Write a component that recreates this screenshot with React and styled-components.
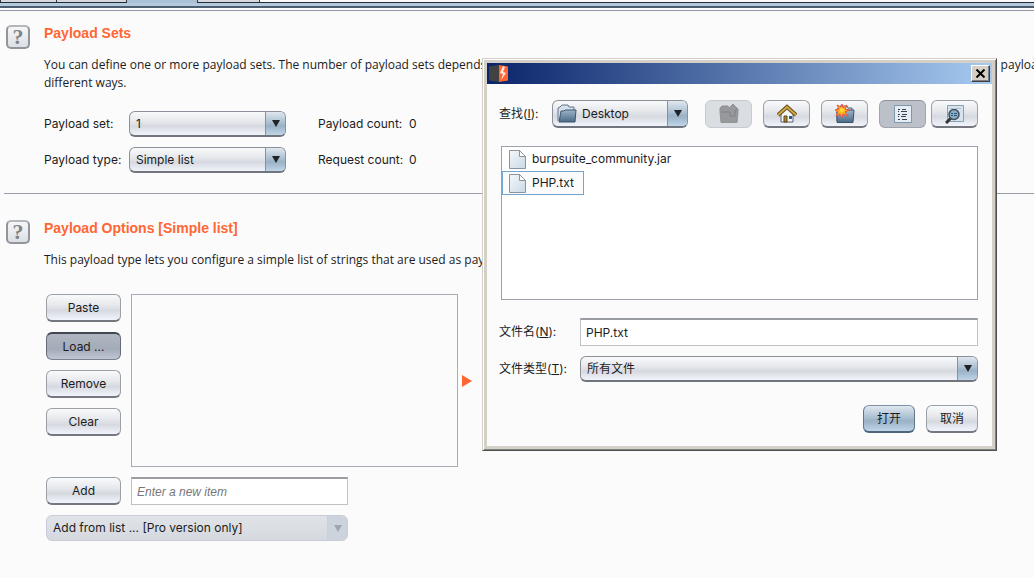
import React, { useId } from "react";
import styled, { createGlobalStyle, css } from "styled-components";

const GlobalStyle = createGlobalStyle`
  * {
    box-sizing: border-box;
  }
  html, body {
    margin: 0;
    background: #fbfbfb;
  }
  body, button, input, select {
    font-family: Inter, "Liberation Sans", Arial, "Noto Sans CJK SC", sans-serif;
    font-size: 12px;
    line-height: 18px;
    color: #1c1c1c;
  }
`;

const silver = "linear-gradient(#f9fafb, #e6e8ec 40%, #d6d9e0 62%, #f2f4fb)";
const blue = "linear-gradient(#dfe7ef, #a9bed0 48%, #9ab1c6 60%, #bfd5e8)";

const Page = styled.div`
  position: relative;
  min-height: 100vh;
  overflow: hidden;
`;

// tab strip
const TabStrip = styled.nav`
  display: flex;
  height: 3px;
  border-bottom: 1px solid #252b36;
`;

const Tab = styled.span`
  width: ${(p) => p.$width}px;
  height: ${(p) => (p.$active ? 3 : 2)}px;
  border-left: 1px solid #333944;
  background: ${(p) => (p.$active ? "#a9c0d5" : "#d5d8de")};
`;

const TabEnd = styled.span`
  flex: 1;
  border-left: 1px solid #333944;
`;

const TabLine = styled.div`
  height: 5px;
  margin-bottom: 2px;
  background: #b3cadd;
  border-bottom: 2px solid #4c5d70;
`;

const Content = styled.main`
  border-top: 1px solid #8f97a6;
`;

// payload sections
const Section = styled.section`
  display: grid;
  grid-template-columns: 24px minmax(0, 1fr);
  column-gap: 14px;
  align-items: start;
  padding: 13px 0 20px 6px;
`;

const HelpButton = styled.button`
  width: 24px;
  height: 24px;
  margin-top: 1px;
  padding: 0;
  border: 2px solid #92969b;
  border-top-color: #b4b7bb;
  border-radius: 5px;
  background: linear-gradient(#f5f6f7, #dcdfe4);
  color: #808286;
  font: bold 22px/20px "Liberation Serif", serif;
`;

const Title = styled.h2`
  margin: 0 0 14px;
  font-family: "Liberation Sans", Arial, sans-serif;
  font-size: 14px;
  line-height: 18px;
  color: #ff6633;
`;

const Text = styled.p`
  margin: 0;
  font-family: "Open Sans", "Liberation Sans", sans-serif;
  white-space: nowrap;
`;

const Divider = styled.hr`
  margin: 0 0 12px 4px;
  border: 0;
  border-top: 1px solid #9a9ea8;
`;

const SetForm = styled.div`
  display: grid;
  grid-template-columns: 85px 157px 91px auto;
  justify-content: start;
  align-items: center;
  row-gap: 10px;
  margin-top: 19px;

  output {
    white-space: nowrap;
  }
`;

const CountLabel = styled.label`
  margin-left: 32px;
  margin-right: -32px;
`;

const Count = styled.output`
  margin-left: 32px;
`;

const Combo = styled.div`
  display: grid;
  grid-template-columns: 1fr 20px;
  height: ${(p) => p.$height ?? 26}px;
  overflow: hidden;
  border: 1px solid #8c9098;
  border-bottom: 2px solid #70747c;
  border-radius: 6px;
  background: ${silver};
  ${(p) =>
    p.$disabled &&
    css`
      border: 1px solid #c8ccd4;
      background: linear-gradient(#e1e3e8, #d5d8de);
    `}
`;

const Select = styled.select`
  grid-area: 1 / 1 / 2 / 3;
  min-width: 0;
  padding: 0 24px 0 ${(p) => p.$indent ?? 6}px;
  border: 0;
  outline: 0;
  appearance: none;
  background: none;
  opacity: 1;
  color: #1c1c1c;
`;

const ComboArrow = styled.span`
  grid-area: 1 / 2 / 2 / 3;
  display: grid;
  place-items: center;
  border-left: 1px solid ${(p) => (p.$disabled ? "#c9d0d9" : "#7d93a8")};
  background: ${(p) => (p.$disabled ? "#ccd3dc" : blue)};
  color: ${(p) => (p.$disabled ? "#a0a6b0" : "#1f2226")};
  pointer-events: none;
`;

const ComboIcon = styled.span`
  grid-area: 1 / 1 / 2 / 2;
  align-self: center;
  height: 20px;
  padding-left: 4px;
  pointer-events: none;
`;

const Button = styled.button`
  display: grid;
  place-items: center;
  width: ${(p) => p.$width ?? 75}px;
  height: 28px;
  padding: 0;
  border: 1px solid #9b9fa6;
  border-bottom: 2px solid #74777d;
  border-radius: 6px;
  background: ${silver};
  ${(p) =>
    p.$pressed &&
    css`
      border-width: 2px 1px 1px;
      border-color: #41464f #666c77 #7c828d;
      background: linear-gradient(#b0b7c2, #a3abb8 60%, #c0c7d4);
    `}
  ${(p) =>
    p.$primary &&
    css`
      border-color: #7e92a6 #60768b #4f6579;
      background: ${blue};
    `}
  ${(p) =>
    p.$selected &&
    css`
      border: 1px solid #a0a4ac;
      border-top-color: #8d9199;
      background: #bcc0c8;
    `}
  &:disabled {
    border: 1px solid #c6cad1;
    background: #dadde2;
  }
`;

const ListEditor = styled.div`
  display: grid;
  grid-template-columns: 75px 327px auto;
  gap: 10px;
  justify-content: start;
  margin: 25px 0 0 2px;
`;

const ButtonColumn = styled.div`
  display: flex;
  flex-direction: column;
  gap: 10px;
`;

const ItemList = styled.div`
  height: 173px;
  border: 1px solid #a6abb6;
`;

const Marker = styled.svg`
  align-self: center;
  margin-left: -6px;
`;

const TextField = styled.input`
  width: 100%;
  height: 28px;
  padding: 0 5px;
  border: 1px solid #bfc1c5;
  border-top: 2px solid #999ca1;
  outline: 0;
  background: #fff;
  &::placeholder {
    font-family: "Liberation Sans", Arial, sans-serif;
    font-style: italic;
    color: #777;
    opacity: 1;
  }
`;

const AddField = styled.div`
  width: 217px;
`;

const ProList = styled.div`
  width: 302px;
  margin: 10px 0 0 2px;
`;

// file chooser
const Window = styled.div`
  position: absolute;
  top: 58px;
  left: 482px;
  width: 515px;
  padding: 4px;
  border: 1px solid;
  border-color: #d4d0c8 #505050 #505050 #d4d0c8;
  box-shadow: inset 1px 1px #fff, inset -1px -1px #808080;
  background: #d4d0c8;
`;

const TitleBar = styled.header`
  display: flex;
  align-items: center;
  justify-content: space-between;
  height: 21px;
  padding: 0 2px;
  background: linear-gradient(90deg, #0a246a, #a6caf0);
`;

const CloseButton = styled.button`
  display: grid;
  place-items: center;
  width: 19px;
  height: 17px;
  padding: 0;
  border: 1px solid;
  border-color: #fff #404040 #404040 #fff;
  box-shadow: inset -1px -1px #808080;
  background: #d4d0c8;
`;

const WindowBody = styled.div`
  padding: 16px 14px 13px 12px;
  background: #fbfbfb;
`;

const Toolbar = styled.div`
  display: grid;
  grid-template-columns: 53px 1fr auto;
  align-items: center;
`;

const Tools = styled.div`
  display: flex;
  gap: 11px;
  margin-left: 17px;
`;

const ViewTools = styled.div`
  display: flex;
  gap: 5px;
`;

const FileList = styled.ul`
  height: 154px;
  margin: 18px 0 18px 2px;
  padding: 0;
  border: 1px solid #9ca1ac;
  background: #fff;
  list-style: none;
`;

const FileItem = styled.li`
  display: flex;
  align-items: center;
  gap: 6px;
  width: fit-content;
  height: 24px;
  padding: 0 9px 0 6px;
  border: 1px solid ${(p) => (p.$selected ? "#73a4d1" : "transparent")};
  background: ${(p) => (p.$selected ? "#fbfbfb" : "none")};
`;

const FileForm = styled.div`
  display: grid;
  grid-template-columns: 81px 1fr;
  row-gap: 10px;
  align-items: center;
`;

const Actions = styled.footer`
  display: flex;
  justify-content: flex-end;
  gap: 11px;
  margin-top: 23px;
`;

const FolderIcon = () => (
  <svg width="20" height="20" viewBox="0 0 20 20">
    <defs>
      <linearGradient id="folderFill" x2="0" y2="1">
        <stop stopColor="#9db4c8" />
        <stop offset="1" stopColor="#4b6a86" />
      </linearGradient>
    </defs>
    <path d="M1 17V4l2-1 2-2h6l1 2h5v4" fill="#d3e0ea" stroke="#60778b" />
    <path d="M2 18 4 7h3l1-1h11l-1 12z" fill="url(#folderFill)" stroke="#3f576c" />
  </svg>
);

const UpFolderIcon = () => (
  <svg width="20" height="20" viewBox="0 0 20 20">
    <path
      d="M2 18.500 1 8V4l2-2h6l1 2 4-4 5 5v3l-1 10.500z"
      fill="#97999c"
      stroke="#909295"
    />
    <path d="M2 8h9v4h5V6h2" fill="none" stroke="#808285" />
  </svg>
);

const HomeIcon = () => (
  <svg width="20" height="20" viewBox="0 0 20 20">
    <path d="M4 10 10 4l6 6v8H4z" fill="#f4f6f8" stroke="#59636c" />
    <path d="M1 11 10 3l9 8" fill="none" stroke="#69501a" strokeWidth="4" />
    <path d="M1 11 10 3l9 8" fill="none" stroke="#cda74c" strokeWidth="2" />
    <path d="M7 12h3v6H7z" fill="#a98232" stroke="#5f4817" />
    <path d="M12 12h3v3h-3z" fill="#245e98" />
  </svg>
);

const NewFolderIcon = () => (
  <svg width="20" height="20" viewBox="0 0 20 20">
    <path d="M2 17V5l2-1 1-2h7l1 2h4v4" fill="#c3d5e3" stroke="#54697c" />
    <path d="M2 18.500V8h8l1-2h8l-1 12.500z" fill="url(#folderFill)" stroke="#3d5468" />
    <path
      d="m7 0 1 4 4-3-2 4 4 1-4 2 3 4-5-2-1 4-2-4-4 2 2-4-3-2 4-1-2-4 4 2z"
      fill="#ffb51c"
      stroke="#f2523c"
    />
    <circle cx="7" cy="6" r="2" fill="#ffdc3a" />
  </svg>
);

const ListIcon = () => (
  <svg width="20" height="20" viewBox="0 0 20 20">
    <path d="M1.500 1.500h17v17h-17z" fill="#e4edf4" stroke="#7f97ab" />
    <path
      d="M5 5.500h2m2 0h4M5 7.500h1m2 0h6M5 10.500h2m2 0h5M5 12.500h1m2 0h5M5 15.500h2m2 0h5"
      stroke="#39424b"
    />
  </svg>
);

const DetailsIcon = () => (
  <svg width="20" height="20" viewBox="0 0 20 20">
    <path d="M2.500 1.500h16v16h-16z" fill="#d6e2ec" stroke="#8ba1b3" />
    <path d="M5 4.500h3m2 0h6" stroke="#b0bfcb" />
    <path d="m6 14-5 5" stroke="#30353a" strokeWidth="3" />
    <circle cx="9" cy="10.500" r="5" fill="#88aecb" stroke="#3f4e5a" strokeWidth="1.500" />
    <path d="M6 9.500h2m1 0h3M6 11.500h2m1 0h3" stroke="#30536e" />
  </svg>
);

const FileIcon = () => (
  <svg width="17" height="19" viewBox="0 0 17 19">
    <defs>
      <linearGradient id="fileFill" x2="1" y2="1">
        <stop stopColor="#f5f8fa" />
        <stop offset="1" stopColor="#cad8e4" />
      </linearGradient>
    </defs>
    <path d="M.5.500h10l6 6v12H.5z" fill="url(#fileFill)" stroke="#8b959f" />
    <path d="M10.500.500v6h6z" fill="#fff" stroke="#8b959f" />
  </svg>
);

const BurpLogo = () => (
  <svg width="19" height="17" viewBox="0 0 19 17">
    <path d="M0 1.500 10 0v17L0 15.500z" fill="#424242" />
    <path d="M10 0l9 1.500v14L10 17z" fill="#ff6633" />
    <path d="M14 1 11 8l3 1-2 6 5-7-3-1 2-5z" fill="#ffe9e0" />
  </svg>
);

const ComboBox = ({ icon, disabled, height, children, ...rest }) => (
  <Combo $disabled={disabled} $height={height}>
    <Select disabled={disabled} $indent={icon ? 29 : 6} {...rest}>
      <option>{children}</option>
    </Select>
    {icon && <ComboIcon>{icon}</ComboIcon>}
    <ComboArrow $disabled={disabled}>
      <svg width="8" height="7" viewBox="0 0 8 7">
        <path d="M0 0h8L4 7z" fill="currentColor" />
      </svg>
    </ComboArrow>
  </Combo>
);

const FileChooser = () => {
  const id = useId();
  return (
    <Window role="dialog">
      <TitleBar>
        <BurpLogo />
        <CloseButton aria-label="Close">
          <svg width="11" height="9" viewBox="0 0 11 9">
            <path d="m1.500.500 8 8m0-8-8 8" stroke="#000" strokeWidth="2" />
          </svg>
        </CloseButton>
      </TitleBar>
      <WindowBody>
        <Toolbar>
          <label htmlFor={`${id}dir`}>
            查找(<u>I</u>):
          </label>
          <ComboBox id={`${id}dir`} icon={<FolderIcon />} height={28}>
            Desktop
          </ComboBox>
          <Tools>
            <Button $width={47} disabled aria-label="Up one level">
              <UpFolderIcon />
            </Button>
            <Button $width={47} aria-label="Home">
              <HomeIcon />
            </Button>
            <Button $width={47} aria-label="New folder">
              <NewFolderIcon />
            </Button>
            <ViewTools>
              <Button $width={47} $selected aria-label="List">
                <ListIcon />
              </Button>
              <Button $width={47} aria-label="Details">
                <DetailsIcon />
              </Button>
            </ViewTools>
          </Tools>
        </Toolbar>
        <FileList>
          <FileItem>
            <FileIcon />
            burpsuite_community.jar
          </FileItem>
          <FileItem $selected>
            <FileIcon />
            PHP.txt
          </FileItem>
        </FileList>
        <FileForm>
          <label htmlFor={`${id}name`}>
            文件名(<u>N</u>):
          </label>
          <TextField id={`${id}name`} defaultValue="PHP.txt" />
          <label htmlFor={`${id}type`}>
            文件类型(<u>T</u>):
          </label>
          <ComboBox id={`${id}type`}>所有文件</ComboBox>
        </FileForm>
        <Actions>
          <Button $width={52} $primary>
            打开
          </Button>
          <Button $width={52}>取消</Button>
        </Actions>
      </WindowBody>
    </Window>
  );
};

const App = () => (
  <Page>
    <GlobalStyle />
    <TabStrip>
      <Tab $width={56} />
      <Tab $width={70} />
      <Tab $width={71} $active />
      <Tab $width={62} />
      <TabEnd />
    </TabStrip>
    <TabLine />
    <Content>
      <Section>
        <HelpButton aria-label="Help">?</HelpButton>
        <div>
          <Title>Payload Sets</Title>
          <Text>
            You can define one or more payload sets. The number of payload sets
            depends on the attack type defined in the Positions tab. Various
            payload types are available for each payload set, and each payload
            type can be customized in
            <br />
            different ways.
          </Text>
          <SetForm>
            <label htmlFor="set">Payload set:</label>
            <ComboBox id="set">1</ComboBox>
            <CountLabel htmlFor="payloads">Payload count:</CountLabel>
            <Count id="payloads">0</Count>
            <label htmlFor="type">Payload type:</label>
            <ComboBox id="type">Simple list</ComboBox>
            <CountLabel htmlFor="requests">Request count:</CountLabel>
            <Count id="requests">0</Count>
          </SetForm>
        </div>
      </Section>
      <Divider />
      <Section>
        <HelpButton aria-label="Help">?</HelpButton>
        <div>
          <Title>Payload Options [Simple list]</Title>
          <Text>
            This payload type lets you configure a simple list of strings that
            are used as payloads.
          </Text>
          <ListEditor>
            <ButtonColumn>
              <Button>Paste</Button>
              <Button $pressed>Load ...</Button>
              <Button>Remove</Button>
              <Button>Clear</Button>
            </ButtonColumn>
            <ItemList />
            <Marker width="10" height="12" viewBox="0 0 10 12">
              <path d="M0 0 10 6 0 12z" fill="#ff6633" />
            </Marker>
            <Button>Add</Button>
            <AddField>
              <TextField aria-label="New item" placeholder="Enter a new item" />
            </AddField>
          </ListEditor>
          <ProList>
            <ComboBox disabled aria-label="Add from list">
              Add from list ... [Pro version only]
            </ComboBox>
          </ProList>
        </div>
      </Section>
    </Content>
    <FileChooser />
  </Page>
);

export default App;
